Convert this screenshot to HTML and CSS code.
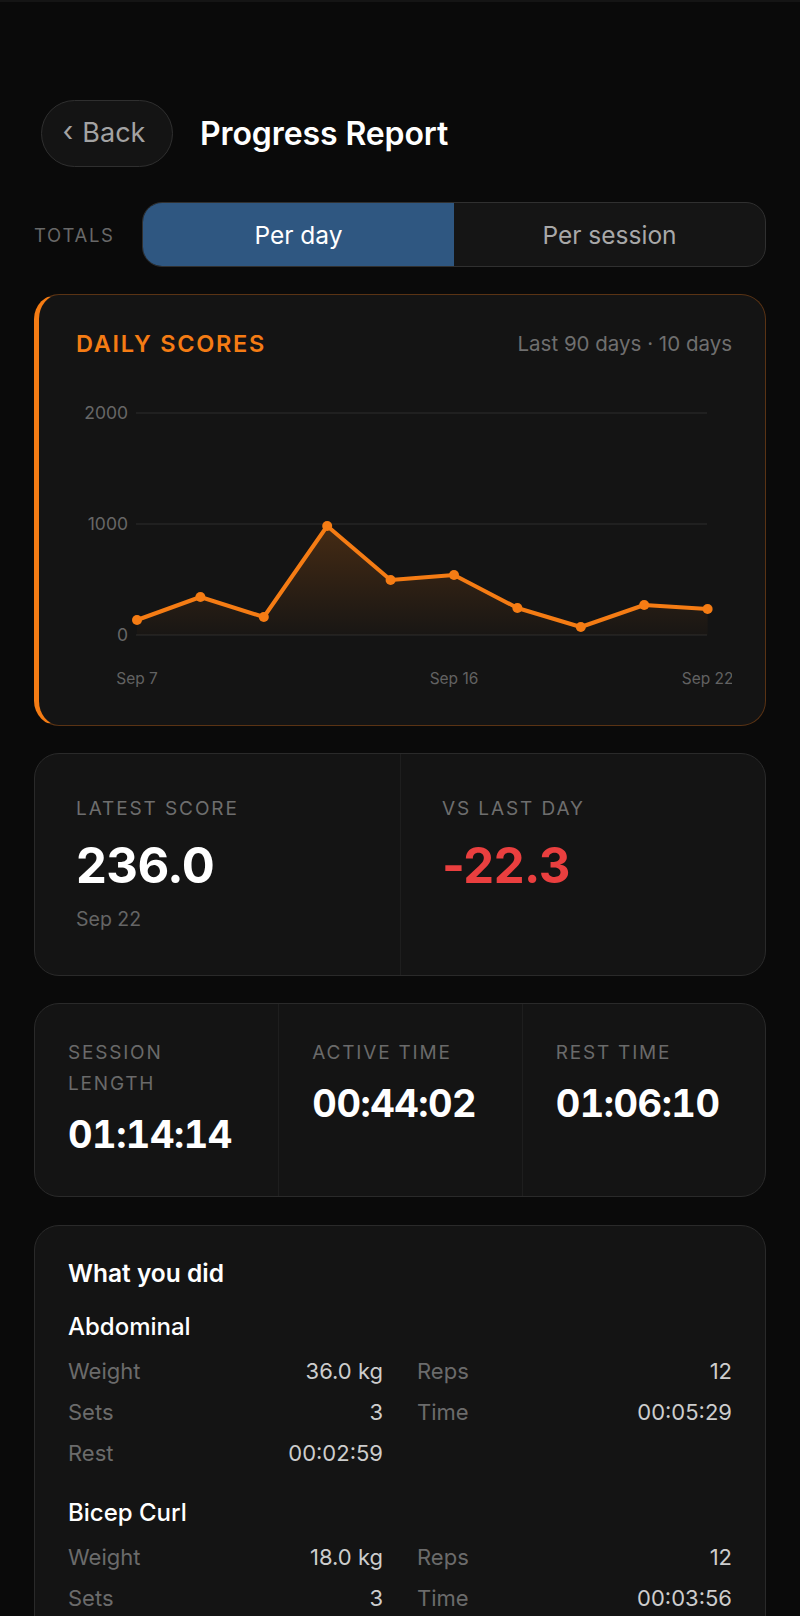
FILE: index.html
```html
<!DOCTYPE html>
<html lang="en">
<head>
<meta charset="utf-8">
<title>Progress Report</title>
<link rel="stylesheet" href="styles.css">
</head>
<body>
<main class="page">
  <header class="header">
    <button class="back"><span class="chev">‹</span><span>Back</span></button>
    <h1 class="title">Progress Report</h1>
  </header>

  <div class="totals">
    <span class="totals-label">TOTALS</span>
    <div class="segmented">
      <div class="seg seg-active">Per day</div>
      <div class="seg">Per session</div>
    </div>
  </div>

  <section class="card chart-card">
    <div class="chart-head">
      <span class="chart-title">DAILY SCORES</span>
      <span class="chart-range">Last 90 days · 10 days</span>
    </div>
    <svg class="chart" viewBox="0 0 656 300" width="656" height="300">
      <defs>
        <linearGradient id="fillg" x1="0" y1="0" x2="0" y2="1">
          <stop offset="0" stop-color="#f57c14" stop-opacity="0.22"/>
          <stop offset="1" stop-color="#f57c14" stop-opacity="0.02"/>
        </linearGradient>
      </defs>
      <line class="grid" x1="60" y1="18" x2="631" y2="18"/>
      <line class="grid" x1="60" y1="129" x2="631" y2="129"/>
      <line class="grid" x1="60" y1="240" x2="631" y2="240"/>
      <text class="ylab" x="52" y="24">2000</text>
      <text class="ylab" x="52" y="135">1000</text>
      <text class="ylab" x="52" y="246">0</text>
      <polygon fill="url(#fillg)" points="61,240 61,225 124.4,202 187.8,222 251.2,131 314.6,185 378,180 441.4,213 504.8,232 568.2,210 631.6,214 631.6,240"/>
      <polyline class="line" points="61,225 124.4,202 187.8,222 251.2,131 314.6,185 378,180 441.4,213 504.8,232 568.2,210 631.6,214"/>
      <g class="dots">
        <circle cx="61" cy="225" r="5"/>
        <circle cx="124.4" cy="202" r="5"/>
        <circle cx="187.8" cy="222" r="5"/>
        <circle cx="251.2" cy="131" r="5"/>
        <circle cx="314.6" cy="185" r="5"/>
        <circle cx="378" cy="180" r="5"/>
        <circle cx="441.4" cy="213" r="5"/>
        <circle cx="504.8" cy="232" r="5"/>
        <circle cx="568.2" cy="210" r="5"/>
        <circle cx="631.6" cy="214" r="5"/>
      </g>
      <text class="xlab" x="61" y="289">Sep 7</text>
      <text class="xlab" x="378" y="289">Sep 16</text>
      <text class="xlab" x="631.6" y="289">Sep 22</text>
    </svg>
  </section>

  <section class="card stats2">
    <div class="stat">
      <div class="stat-label">LATEST SCORE</div>
      <div class="stat-value">236.0</div>
      <div class="stat-sub">Sep 22</div>
    </div>
    <div class="stat">
      <div class="stat-label">VS LAST DAY</div>
      <div class="stat-value neg">-22.3</div>
    </div>
  </section>

  <section class="card stats3">
    <div class="stat3">
      <div class="stat3-label">SESSION<br>LENGTH</div>
      <div class="stat3-value">01:14:14</div>
    </div>
    <div class="stat3">
      <div class="stat3-label">ACTIVE TIME</div>
      <div class="stat3-value">00:44:02</div>
    </div>
    <div class="stat3">
      <div class="stat3-label">REST TIME</div>
      <div class="stat3-value">01:06:10</div>
    </div>
  </section>

  <section class="card did">
    <h2 class="did-title">What you did</h2>
    <div class="exercise">
      <h3 class="ex-name">Abdominal</h3>
      <div class="ex-grid">
        <div class="kv"><span class="k">Weight</span><span class="v">36.0 kg</span></div>
        <div class="kv"><span class="k">Reps</span><span class="v">12</span></div>
        <div class="kv"><span class="k">Sets</span><span class="v">3</span></div>
        <div class="kv"><span class="k">Time</span><span class="v">00:05:29</span></div>
        <div class="kv"><span class="k">Rest</span><span class="v">00:02:59</span></div>
      </div>
    </div>
    <div class="exercise">
      <h3 class="ex-name">Bicep Curl</h3>
      <div class="ex-grid">
        <div class="kv"><span class="k">Weight</span><span class="v">18.0 kg</span></div>
        <div class="kv"><span class="k">Reps</span><span class="v">12</span></div>
        <div class="kv"><span class="k">Sets</span><span class="v">3</span></div>
        <div class="kv"><span class="k">Time</span><span class="v">00:03:56</span></div>
      </div>
    </div>
  </section>
</main>
</body>
</html>
```

FILE: styles.css
```css
* { box-sizing: border-box; }

html, body {
  margin: 0;
  padding: 0;
  background: #0a0a0a;
  font-family: Inter, "Noto Sans", "Liberation Sans", sans-serif;
  color: #ffffff;
}

body {
  border-top: 2px solid #151515;
  height: 1616px;
  overflow: hidden;
}

.page {
  padding: 98px 34px 0 34px;
  display: flex;
  flex-direction: column;
}

.header {
  display: flex;
  align-items: center;
  gap: 27px;
  padding-left: 7px;
}

.back {
  width: 132px;
  height: 67px;
  border-radius: 34px;
  border: 1.5px solid #2f2f2f;
  background: #141414;
  color: #a3a3a3;
  font-family: inherit;
  font-size: 27px;
  font-weight: 400;
  display: flex;
  align-items: center;
  justify-content: center;
  gap: 9px;
  padding: 0 0 2px 0;
}

.chev {
  font-size: 28px;
  line-height: 1;
  margin-top: -3px;
  margin-left: -6px;
}

.title {
  margin: 0;
  font-size: 32px;
  font-weight: 600;
  letter-spacing: -0.1px;
}

.totals {
  margin-top: 35px;
  display: flex;
  align-items: center;
  gap: 26px;
}

.totals-label {
  font-size: 18.5px;
  letter-spacing: 1.7px;
  color: #686868;
  width: 82px;
}

.segmented {
  flex: 1;
  height: 65px;
  display: flex;
  border: 1.5px solid #303030;
  border-radius: 20px;
  background: #151515;
  overflow: hidden;
}

.seg {
  flex: 1;
  display: flex;
  align-items: center;
  justify-content: center;
  font-size: 24.5px;
  color: #a8a8a8;
}

.seg-active {
  background: #2f5781;
  color: #ffffff;
}

.card {
  background: #141414;
  border: 1px solid #2a2a2a;
  border-radius: 25px;
}

.chart-card {
  margin-top: 27px;
  border-color: #5a3314;
  border-left: 5px solid #f57c14;
  padding: 34px 33px 30px 37px;
}

.chart-head {
  display: flex;
  justify-content: space-between;
  align-items: center;
  height: 28px;
}

.chart-title {
  font-size: 23.5px;
  font-weight: 600;
  letter-spacing: 1.7px;
  color: #f57c14;
}

.chart-range {
  font-size: 20.5px;
  color: #6f6f6f;
}

.chart {
  display: block;
  margin-top: 38px;
}

.grid {
  stroke: #242424;
  stroke-width: 1.5;
}

.ylab {
  font-family: Inter, "Noto Sans", sans-serif;
  font-size: 17.5px;
  fill: #676767;
  text-anchor: end;
}

.xlab {
  font-family: Inter, "Noto Sans", sans-serif;
  font-size: 15.5px;
  fill: #626262;
  text-anchor: middle;
}

.line {
  fill: none;
  stroke: #f57c14;
  stroke-width: 4;
  stroke-linejoin: round;
  stroke-linecap: round;
}

.dots circle {
  fill: #f57c14;
}

.stats2 {
  margin-top: 27px;
  display: grid;
  grid-template-columns: 1fr 1fr;
  height: 223px;
}

.stat {
  padding: 43px 0 0 41px;
}

.stat + .stat {
  border-left: 1px solid #1e1e1e;
}

.stat-label {
  font-size: 19px;
  line-height: 24px;
  letter-spacing: 1.9px;
  color: #6e6e6e;
}

.stat-value {
  margin-top: 17px;
  font-size: 49px;
  line-height: 56px;
  font-weight: 700;
  letter-spacing: -0.5px;
  color: #ffffff;
}

.stat-value.neg {
  color: #ea3f3f;
}

.stat-sub {
  margin-top: 13px;
  font-size: 19.5px;
  line-height: 24px;
  color: #656565;
}

.stats3 {
  margin-top: 27px;
  display: grid;
  grid-template-columns: 1fr 1fr 1fr;
}

.stat3 {
  padding: 33px 0 40px 33px;
}

.stat3 + .stat3 {
  border-left: 1px solid #1e1e1e;
}

.stat3-label {
  font-size: 19px;
  line-height: 31px;
  letter-spacing: 1.8px;
  color: #6a6a6a;
}

.stat3-value {
  margin-top: 13px;
  font-size: 38px;
  line-height: 44px;
  font-weight: 700;
  letter-spacing: -0.5px;
  font-variant-numeric: tabular-nums;
  color: #ffffff;
}

.did {
  margin-top: 28px;
  padding: 32px 33px 40px 33px;
  border-bottom-left-radius: 0;
  border-bottom-right-radius: 0;
}

.did-title {
  margin: 0;
  font-size: 24.5px;
  line-height: 30px;
  font-weight: 600;
}

.exercise {
  margin-top: 24px;
}

.exercise + .exercise {
  margin-top: 25px;
}

.ex-name {
  margin: 0 0 8px 0;
  font-size: 24px;
  line-height: 30px;
  font-weight: 500;
}

.ex-grid {
  display: grid;
  grid-template-columns: 1fr 1fr;
  column-gap: 34px;
}

.kv {
  display: flex;
  justify-content: space-between;
  align-items: center;
  height: 41px;
  font-size: 22px;
}

.k {
  color: #6b6b6b;
  line-height: 26px;
}

.v {
  color: #cdcdcd;
  line-height: 26px;
}
```
